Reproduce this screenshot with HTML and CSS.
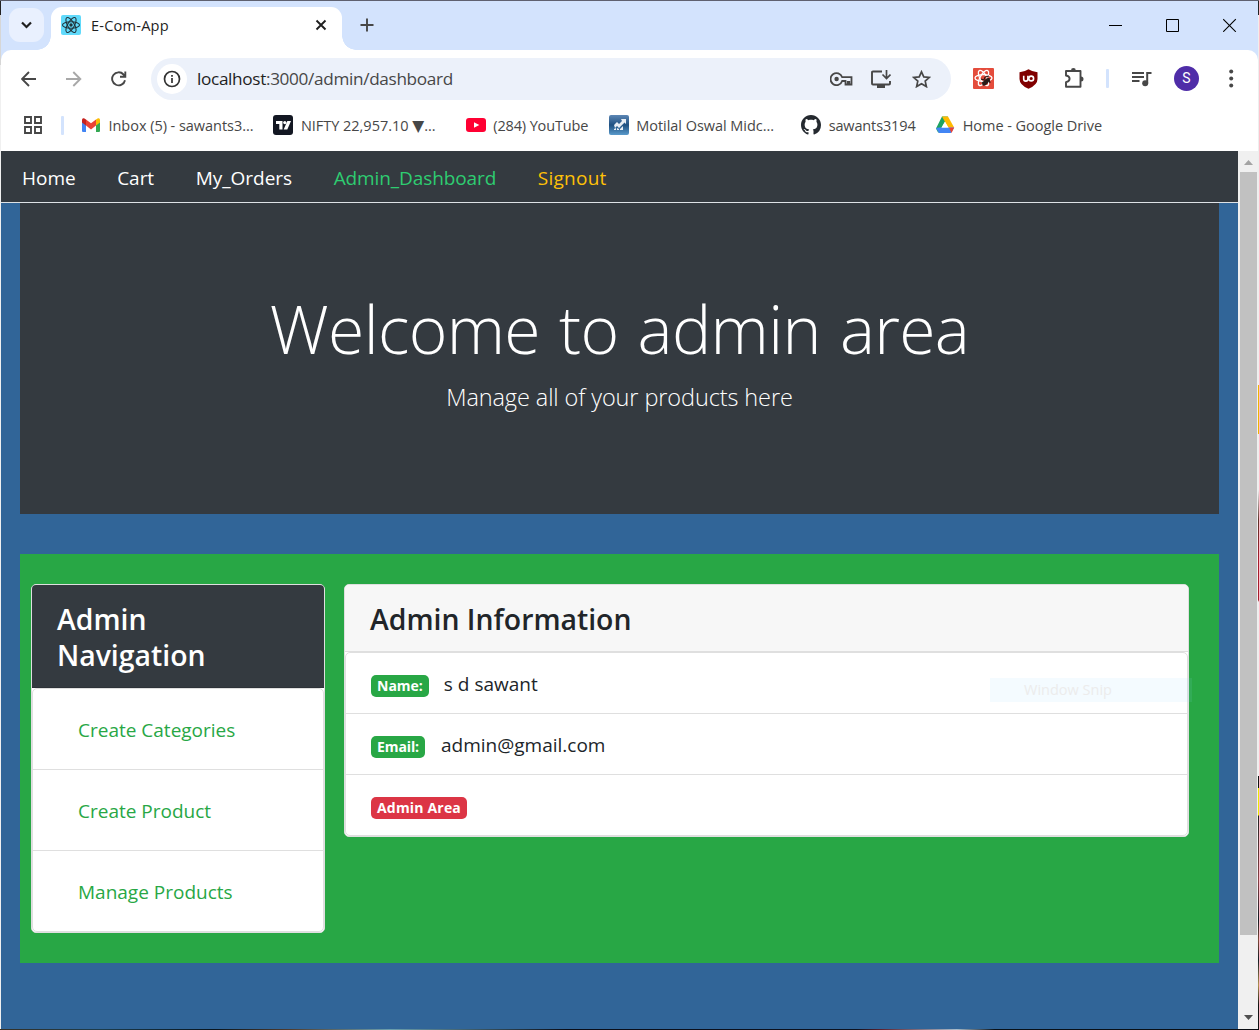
FILE: index.html
```html
<!DOCTYPE html>
<html lang="en">
<head>
<meta charset="utf-8">
<title>E-Com-App</title>
<link rel="stylesheet" href="styles.css">
</head>
<body>
<div class="window">
  <header class="tab-strip">
    <button class="tab-search" aria-label="Search tabs"><svg width="12" height="8" viewBox="0 0 12 8"><path d="M1 1.500 5.500 6 10 1.500" fill="none" stroke="#1f1f1f" stroke-width="2.200"/></svg></button>
    <div class="tab">
      <svg width="20" height="20" viewBox="0 0 20 20"><rect width="20" height="20" rx="2" fill="#61dafb"/><g fill="none" stroke="#20323a" stroke-width="1.100"><ellipse cx="10" cy="10" rx="8.500" ry="3.300"/><ellipse cx="10" cy="10" rx="8.500" ry="3.300" transform="rotate(60 10 10)"/><ellipse cx="10" cy="10" rx="8.500" ry="3.300" transform="rotate(120 10 10)"/></g><circle cx="10" cy="10" r="1.700" fill="#20323a"/></svg>
      <span class="tab-title">E-Com-App</span>
      <svg class="tab-close" width="12" height="12" viewBox="0 0 12 12"><path d="m1.500 1.500 9 9m0-9-9 9" stroke="#1f1f1f" stroke-width="1.900"/></svg>
    </div>
    <svg class="new-tab" width="14" height="14" viewBox="0 0 14 14"><path d="M7 .5v13M.5 7h13" stroke="#474747" stroke-width="1.900"/></svg>
    <div class="controls">
      <svg width="14" height="14" viewBox="0 0 14 14"><path d="M0 7.500h13" stroke="#000"/></svg>
      <svg width="14" height="14" viewBox="0 0 14 14"><path d="M.5 1.500h12v12H.5z" fill="none" stroke="#000"/></svg>
      <svg width="14" height="14" viewBox="0 0 14 14"><path d="m.2 1.200 12.600 12.600m0-12.600L.2 13.800" stroke="#000" stroke-width="1.100"/></svg>
    </div>
  </header>
  <div class="chrome">
    <div class="toolbar">
      <span class="slot"><svg width="16" height="16" viewBox="0 0 16 16"><path d="M15 8H1.500M8 1 1 8l7 7" fill="none" stroke="#474747" stroke-width="1.900"/></svg></span>
      <span class="slot"><svg width="16" height="16" viewBox="0 0 16 16"><path d="M0 8h13.500M7.300 1l7 7-7 7" fill="none" stroke="#a8a8a8" stroke-width="1.900"/></svg></span>
      <span class="slot"><svg width="16" height="16" viewBox="0 0 16 16"><path d="M14 9.200A6.500 6.500 0 1 1 12.500 3.500l1.600 1.700M14.300 .5v5.300H9" fill="none" stroke="#474747" stroke-width="1.900"/></svg></span>
      <div class="omnibox">
        <span class="site-info"><svg width="18" height="18" viewBox="0 0 18 18"><circle cx="9" cy="9" r="7.500" fill="none" stroke="#333" stroke-width="1.700"/><path d="M9 8v5M9 5v1.800" stroke="#333" stroke-width="1.700"/></svg></span>
        <span class="url"><b>localhost</b>:3000/admin/dashboard</span>
        <span class="slot"><svg width="23" height="14" viewBox="0 0 23 14"><path d="M12.200 5.200A6 6 0 1 0 12.200 9h3.300v3.500h2.300V9.800h1.500v2.700h2.200V5.200z" fill="none" stroke="#474747" stroke-width="1.800"/><circle cx="6.600" cy="7" r="2.200" fill="#474747"/></svg></span>
        <span class="slot"><svg class="install" width="20" height="19" viewBox="0 0 20 19"><path d="M11 1.500H2q-1 0-1 1v11q0 1 1 1h16q1 0 1-1V11" fill="none" stroke="#474747" stroke-width="1.900"/><path d="M15.500 0v8m-4-3.500 4 4 4-4" fill="none" stroke="#474747" stroke-width="1.700"/><path d="M6 15h8v3H6z" fill="#474747"/></svg></span>
        <span class="slot"><svg width="19" height="18" viewBox="0 0 19 18"><path d="m9.500 1.800 2.300 5.100 5.600.5-4.200 3.700 1.200 5.500-4.900-2.900-4.900 2.900 1.200-5.500-4.200-3.700 5.600-.5z" fill="none" stroke="#474747" stroke-width="1.700"/></svg></span>
      </div>
      <span class="slot"><svg width="21" height="21" viewBox="0 0 21 21"><rect width="21" height="21" rx="1" fill="#e44c3c"/><g fill="none" stroke="#fff" stroke-width="1.300"><ellipse cx="10.500" cy="10" rx="8.500" ry="3.400"/><ellipse cx="10.500" cy="10" rx="8.500" ry="3.400" transform="rotate(60 10.500 10)"/><ellipse cx="10.500" cy="10" rx="8.500" ry="3.400" transform="rotate(120 10.500 10)"/></g><ellipse cx="12.800" cy="14" rx="2.300" ry="4.500" transform="rotate(42 12.800 14)" fill="#2b1a17"/><path d="m8 11 3 1 1-3m2 1 3 1m-8 3 2 3m5-6 1 4m-5-6 4-1" stroke="#2b1a17" stroke-width="1.100" fill="none"/></svg></span>
      <span class="slot"><svg width="20" height="20" viewBox="0 0 20 20"><path d="M9.500 .3Q13.500 3 18.500 3.200V10q0 6-9 9.800Q.5 16 .5 10V3.200Q5.500 3 9.500 .3z" fill="#800000"/><path d="M4.700 6.800v3.200a2.100 2.100 0 0 0 4.200 0V6.800" fill="none" stroke="#fff" stroke-width="1.600"/><circle cx="12.200" cy="9.500" r="2.400" fill="none" stroke="#fff" stroke-width="1.600"/></svg></span>
      <span class="slot"><svg class="puzzle" width="21" height="21" viewBox="0 0 21 21"><path d="M2 3h14.500v15.800H2v-4.700q3.600-.6 3.600-3.300T2 7.500z" fill="none" stroke="#474747" stroke-width="1.900" stroke-linejoin="round"/><path d="M7 2.500a2.400 2.400 0 0 1 4.800 0zM17 8.500a2.500 2.500 0 0 1 0 5z" fill="#474747"/></svg></span>
      <span class="divider"></span>
      <span class="slot"><svg width="20" height="16" viewBox="0 0 20 16"><path d="M0 2h12M0 6h12M0 10h7.500" stroke="#474747" stroke-width="1.800"/><path d="M15.200 12V2H19.500" fill="none" stroke="#474747" stroke-width="2"/><circle cx="13.200" cy="12.300" r="3" fill="#474747"/></svg></span>
      <span class="slot"><span class="avatar">S</span></span>
      <span class="slot"><svg width="5" height="19" viewBox="0 0 5 19"><g fill="#474747"><circle cx="2.200" cy="2.500" r="2"/><circle cx="2.200" cy="9.500" r="2"/><circle cx="2.200" cy="16.500" r="2"/></g></svg></span>
    </div>
    <nav class="bookmarks">
      <svg width="18" height="18" viewBox="0 0 18 18"><path d="M1 1h6v6H1zM11 1h6v6h-6zM1 11h6v6H1zM11 11h6v6h-6z" fill="none" stroke="#474747" stroke-width="1.900"/></svg>
      <span class="divider"></span>
      <a class="bm"><svg width="20" height="20" viewBox="0 0 20 20"><path d="M1 5v11q0 1 1 1h3V8.500z" fill="#4285f4"/><path d="M19 5v11q0 1-1 1h-3V8.500z" fill="#34a853"/><path d="M15 4.500 17 3.300q2-.5 2 1.800v2.500l-4 3z" fill="#fbbc04"/><path d="M5 4.500 3 3.300Q1 2.800 1 5.100v2.500l4 3z" fill="#c5221f"/><path d="m5 4.500 5 3.800 5-3.800v6.100l-5 3.800-5-3.800z" fill="#ea4335"/></svg>Inbox (5) - sawants3...</a>
      <a class="bm"><svg width="20" height="20" viewBox="0 0 20 20"><rect width="20" height="20" rx="3" fill="#131722"/><path d="M3 6h6.500v8.500H6.300V9H3z" fill="#fff"/><circle cx="11.800" cy="7.600" r="1.600" fill="#fff"/><path d="M14.300 6H18l-3.700 8.500h-3.600z" fill="#fff"/></svg><span class="ticker">NIFTY 22,957.10 <i>▼</i>...</span></a>
      <a class="bm narrow"><svg width="20" height="20" viewBox="0 0 20 20"><rect y="3" width="20" height="14" rx="3" fill="#ff0033"/><path d="m8 7.300 5.300 2.700L8 12.700z" fill="#fff"/></svg><span class="tight">(284) YouTube</span></a>
      <a class="bm"><svg width="20" height="20" viewBox="0 0 20 20"><defs><linearGradient id="steel" x2="0" y2="1"><stop stop-color="#5d87b5"/><stop offset=".5" stop-color="#1e5081"/><stop offset="1" stop-color="#5a9acb"/></linearGradient></defs><rect width="20" height="20" rx="2" fill="url(#steel)"/><path d="m5 10 3-3 2 2 3-3-1-2h5v5l-1.500-1.500L10 13l-2-2-2 2zM5 14l2-1v2H5zm3-1 2 1v1H8zm3 1 3-3v4h-3z" fill="#e8eef5"/></svg>Motilal Oswal Midc...</a>
      <a class="bm mid"><svg width="20" height="20" viewBox="0 0 16 16"><path fill="#24292f" d="M8 0C3.580 0 0 3.580 0 8c0 3.540 2.290 6.530 5.470 7.590.4.070.55-.17.55-.38 0-.19-.01-.82-.01-1.490-2.010.37-2.530-.49-2.690-.94-.09-.23-.48-.94-.82-1.130-.28-.15-.68-.52-.01-.53.63-.01 1.080.58 1.230.82.72 1.210 1.870.87 2.330.66.07-.52.28-.87.51-1.070-1.780-.2-3.640-.89-3.640-3.950 0-.87.31-1.590.82-2.150-.08-.2-.36-1.020.08-2.120 0 0 .67-.21 2.200.82.64-.18 1.320-.27 2-.27s1.360.09 2 .27c1.530-1.040 2.200-.82 2.200-.82.44 1.100.16 1.920.08 2.120.51.56.82 1.270.82 2.150 0 3.070-1.870 3.750-3.650 3.950.29.25.54.73.54 1.480 0 1.070-.01 1.930-.01 2.200 0 .21.15.46.55.38A8.010 8.010 0 0 0 16 8c0-4.420-3.580-8-8-8z"/></svg><span class="tight">sawants3194</span></a>
      <a class="bm"><svg width="20" height="20" viewBox="0 0 20 20"><path d="M7 1.500h6l-9.700 16.500L1 13.500z" fill="#1ea362"/><path d="M7 1.500h6l6.200 11h-6z" fill="#ffba00"/><path d="M4 12.500h15.200L16 18H4L1 13z" fill="#4285f4"/><path d="m14 12.500h5.200L16.500 18z" fill="#ea4335"/><path d="M10 6.800 13.300 12.500H6.700z" fill="#fff"/></svg>Home - Google Drive</a>
    </nav>
  </div>
  <div class="viewport">
    <main class="page">
      <nav class="site-nav">
        <a>Home</a><a>Cart</a><a>My_Orders</a><a class="active">Admin_Dashboard</a><a class="signout">Signout</a>
      </nav>
      <section class="hero">
        <h1>Welcome to admin area</h1>
        <p>Manage all of your products here</p>
      </section>
      <section class="panel">
        <div class="card side">
          <h3 class="card-header dark">Admin<br>Navigation</h3>
          <ul class="list">
            <li><a>Create Categories</a></li>
            <li><a>Create Product</a></li>
            <li><a>Manage Products</a></li>
          </ul>
        </div>
        <div class="card info">
          <h3 class="card-header">Admin Information</h3>
          <ul class="list">
            <li><span class="badge">Name:</span><span>s d sawant</span></li>
            <li><span class="badge email">Email:</span><span>admin@gmail.com</span></li>
            <li><span class="badge danger">Admin Area</span></li>
          </ul>
          <div class="snip">Window Snip</div>
        </div>
      </section>
    </main>
    <div class="scrollbar">
      <svg width="9" height="5" viewBox="0 0 9 5"><path d="M4.500 0 9 5H0z" fill="#a3a3a3"/></svg>
      <div class="thumb"></div>
      <svg width="9" height="5" viewBox="0 0 9 5"><path d="M0 0h9L4.500 5z" fill="#505050"/></svg>
    </div>
  </div>
</div>
</body>
</html>
```
FILE: styles.css
```css
* { box-sizing: border-box; }
body { margin: 0; width: 1259px; height: 1030px; overflow: hidden; font-family: "Open Sans", "Noto Sans", sans-serif; color: #212529; }
svg { display: block; flex: none; }
.window {
  display: flex; flex-direction: column; height: 1030px; padding: 1px;
  background:
    linear-gradient(#5f6170, #5f6170) 0 0 / 100% 1px no-repeat,
    linear-gradient(90deg, #353025, #1c3c4c 8%, #08151f 17%, #4f3b2e 23%, #6b9fae 31%, #0a0d18 45%, #0c1220 68%, #5d2130 70%, #a8bccb 76%, #081119 79%, #0a0d12) 0 100% / 100% 1px no-repeat,
    linear-gradient(#222 0 15px, #d6d6d6 15px 65px, #f0f0f0 65px) 0 0 / 1px 100% no-repeat,
    linear-gradient(#222 0 15px, #eee 15px 385px, #f0b400 385px 434px, #eee 434px 490px, #5d3028 520px, #a61c2c 560px 600px, #eee 602px 776px, #111 776px 788px, #ece800 788px 815px, #222 816px, #873f45 880px, #101820 920px, #804838 940px, #101820 960px, #b09050 985px, #111 1005px) 100% 0 / 1px 100% no-repeat;
}

/* Browser chrome */
.tab-strip { display: flex; align-items: center; height: 49px; padding: 0 0 1px 8px; background: #d3e3fd; flex: none; }
.tab-search { width: 35px; height: 34px; padding: 0; border: 0; border-radius: 11px; background: #e9f0fe; display: grid; place-items: center; }
.tab { position: relative; align-self: flex-end; display: flex; align-items: center; width: 291px; height: 43px; margin: 0 0 -1px 7px; padding: 0 15px 7px 10px; background: #fff; border-radius: 11px 11px 0 0; }
.tab::before, .tab::after { content: ""; position: absolute; bottom: 0; width: 14px; height: 14px; }
.tab::before { left: -14px; background: radial-gradient(circle at 0 0, transparent 13.5px, #fff 14px); }
.tab::after { right: -14px; background: radial-gradient(circle at 100% 0, transparent 13.5px, #fff 14px); }
.tab-title { margin-left: 10px; font-size: 14.6px; letter-spacing: .2px; color: #1f1f1f; }
.tab-close { margin-left: auto; }
.new-tab { margin-left: 17.5px; }
.controls { display: flex; gap: 43px; margin-left: auto; padding-right: 21px; }
.chrome { flex: none; height: 101px; background: linear-gradient(#d3e3fd, #d3e3fd) 0 0 / 100% 12px no-repeat; }
.toolbar { display: flex; align-items: center; height: 57px; padding-left: 5px; background: #fff; border-radius: 10px 10px 0 0; }
.slot { display: grid; place-items: center; width: 45px; height: 42px; flex: none; }
.omnibox { display: flex; align-items: center; width: 800px; height: 42px; margin: 0 10px; padding: 0 10px 0 6px; background: #ecf1fa; border-radius: 21px; }
.omnibox .slot { width: 40px; }
.site-info { display: grid; place-items: center; width: 30px; height: 30px; border-radius: 50%; background: #fff; }
.url { margin: 0 auto 0 10px; font-size: 17.2px; letter-spacing: -.34px; color: #474747; }
.url b { font-weight: 400; color: #1f1f1f; }
.install { margin-top: 2px; }
.puzzle { margin-left: 2px; }
.divider { width: 3px; height: 19px; border-radius: 1px; background: #d3e3fd; }
.toolbar > .divider { margin: 0 10px; }
.avatar { width: 25px; height: 25px; border-radius: 50%; background: #4f2da8; color: #fff; font: 14px/25px Roboto, sans-serif; text-align: center; }
.bookmarks { display: flex; align-items: center; height: 44px; padding: 0 0 8px 23px; background: #fff; }
.bookmarks .divider { margin: 0 17px 0 19px; }
.bm { display: flex; align-items: center; gap: 7.5px; width: 192.4px; font-size: 14.5px; letter-spacing: -.04px; color: #474747; white-space: nowrap; }
.bm.narrow { width: 143px; }
.bm.mid { width: 134px; }
.tight { letter-spacing: -.14px; }
.ticker { letter-spacing: -.02px; }
.ticker i { font: 15.5px "DejaVu Sans", sans-serif; }

/* Site */
.viewport { display: flex; height: 878px; }
.page { width: 1237px; background: #316598; }
.site-nav { display: flex; align-items: center; gap: 41.6px; height: 52px; padding: 2px 0 0 21px; background: #343a40; border-bottom: 1px solid #dee2e6; font-size: 19px; letter-spacing: -.03px; color: #fff; }
.site-nav .active { color: #2ecc71; letter-spacing: -.1px; }
.site-nav .signout { color: #ffc107; letter-spacing: .25px; }
.hero { margin: 0 19px 40px; height: 311px; padding: 83px 0 0; background: #343a40; color: #fff; text-align: center; white-space: nowrap; }
.hero h1 { margin: 0 0 8px; font-weight: 300; font-size: 66px; line-height: 84px; letter-spacing: -.65px; word-spacing: 2.6px; }
.hero p { margin: 0; font-weight: 310; font-size: 23.5px; line-height: 38px; letter-spacing: -.1px; }
.panel { display: flex; align-items: flex-start; gap: 19px; height: 409px; margin: 0 19px; padding: 30px 30px 0 11px; background: #28a745; }
.card { position: relative; border: 1px solid #dfdfdf; border-radius: 5px; background: #fff; }
.side { width: 294px; }
.info { width: 845px; }
.card-header { margin: 0; padding: 16px 25px 14px; border-bottom: 1px solid #dfdfdf; border-radius: 4px 4px 0 0; background: #f7f7f7; font-size: 28.4px; font-weight: 600; line-height: 36px; }
.card-header.dark { background: #343a40; border-color: #2d3238; color: #fff; }
.list { margin: 0; padding: 0; list-style: none; border: 1px solid #dfdfdf; border-radius: 5px; }
.list li { display: flex; align-items: center; height: 61px; padding: 2px 25px 0; border-bottom: 1px solid #dfdfdf; font-size: 19px; }
.list li:last-child { height: 60px; border-bottom: 0; }
.side .list li { height: 81px; padding-left: 45px; color: #28a745; }
.side .list li:last-child { height: 80px; }
.badge { height: 22px; margin: 3px 15px 0 0; padding: 0 6px; border-radius: 5px; background: #28a745; color: #fff; font-size: 14px; font-weight: 700; line-height: 22px; }
.badge.email { letter-spacing: -.1px; margin-right: 16px; }
.badge.danger { background: #dc3545; letter-spacing: .19px; }
.snip { position: absolute; left: 645px; top: 93px; width: 202px; height: 24px; padding-left: 34px; background: rgba(145, 215, 255, .1); font-size: 14.5px; line-height: 24px; color: #ececec; }
.scrollbar { display: flex; flex-direction: column; align-items: center; width: 20px; padding: 9px 0 9px; background: #f0f0f0; }
.thumb { width: 17px; height: 763px; margin: 7px 0 auto; background: #c1c1c1; }
```
